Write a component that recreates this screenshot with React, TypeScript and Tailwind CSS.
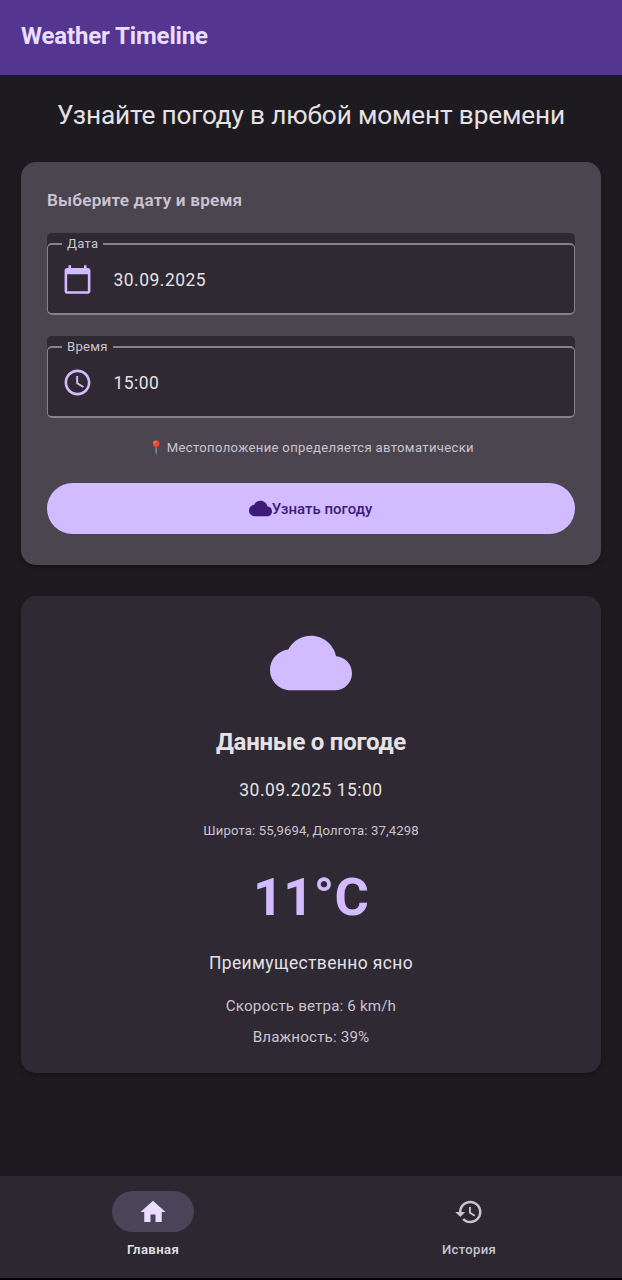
import type { ReactNode } from "react";

const CLOUD =
  "M19.35 10.04C18.67 6.59 15.64 4 12 4 9.11 4 6.6 5.64 5.35 8.04 2.34 8.36 0 10.91 0 14c0 3.31 2.69 6 6 6h13c2.76 0 5-2.24 5-5 0-2.64-2.05-4.78-4.65-4.96z";
const CALENDAR =
  "M20 3h-1V1h-2v2H7V1H5v2H4c-1.1 0-2 .9-2 2v16c0 1.1.9 2 2 2h16c1.1 0 2-.9 2-2V5c0-1.1-.9-2-2-2zm0 18H4V8h16v13z";
const CLOCK =
  "M11.99 2C6.47 2 2 6.48 2 12s4.47 10 9.99 10C17.52 22 22 17.52 22 12S17.52 2 11.99 2zM12 20c-4.42 0-8-3.58-8-8s3.58-8 8-8 8 3.58 8 8-3.58 8-8 8zm.5-13H11v6l5.25 3.15.75-1.23-4.5-2.67z";
const HOME = "M10 20v-6h4v6h5v-8h3L12 3 2 12h3v8z";
const HISTORY =
  "M13 3c-4.97 0-9 4.03-9 9H1l3.89 3.89.07.14L9 12H6c0-3.87 3.13-7 7-7s7 3.13 7 7-3.13 7-7 7c-1.93 0-3.68-.79-4.94-2.06l-1.42 1.42C8.27 19.99 10.51 21 13 21c4.97 0 9-4.03 9-9s-4.03-9-9-9zm-1 5v5l4.28 2.54.72-1.21-3.5-2.08V8H12z";

function Icon({ path, className }: { path: string; className: string }) {
  return (
    <svg viewBox="0 0 24 24" fill="currentColor" className={className}>
      <path d={path} />
    </svg>
  );
}

function Field({ label, value, icon }: { label: string; value: string; icon: string }) {
  return (
    <div className="h-[82px] rounded-[5px] bg-[#2e2933]">
      <fieldset className="flex h-full flex-col rounded-[5px] border border-y-2 border-[#86818b] pl-[14px]">
        <legend className="h-[22px] px-[5px] text-[13.1px] leading-[22px] tracking-[0.3px] text-[#cac4d0]">
          {label}
        </legend>
        <div className="flex h-[48px] items-center">
          <Icon path={icon} className="size-[31px] text-[#d3bbff]" />
          <span className="ml-[20.5px] mt-px text-[17.45px] leading-6 tracking-[0.5px] text-[#e6e1e5]">{value}</span>
        </div>
      </fieldset>
    </div>
  );
}

function NavItem({ label, icon, active }: { label: string; icon: string; active?: boolean }) {
  return (
    <button className="flex flex-1 flex-col items-center">
      <span
        className={
          active
            ? "flex h-[41px] w-[82px] items-center justify-center rounded-full bg-[#4b4358] text-[#ebddff]"
            : "flex h-[41px] w-[82px] items-center justify-center text-[#cac4d0]"
        }
      >
        <Icon path={icon} className="size-[30px]" />
      </span>
      <span
        className={
          active
            ? "mt-[8px] text-[13.1px] font-semibold leading-5 tracking-[0.4px] text-[#e6e1e5]"
            : "mt-[8px] text-[13.1px] font-medium leading-5 tracking-[0.3px] text-[#cac4d0]"
        }
      >
        {label}
      </span>
    </button>
  );
}

function Line({ className, children }: { className: string; children: ReactNode }) {
  return <p className={`whitespace-nowrap text-center ${className}`}>{children}</p>;
}

export default function App() {
  return (
    <div className="flex h-[1280px] w-[622px] flex-col overflow-hidden bg-[#1d1b1f] font-['Roboto','Noto_Color_Emoji',sans-serif]">
      <header className="h-[75px] bg-[#543690] pl-[21px] pt-[20px]">
        <h1 className="text-[24px] font-bold leading-8 tracking-[-0.14px] text-[#ebddff]">Weather Timeline</h1>
      </header>

      <main className="flex flex-1 flex-col px-[21px] pt-[24px]">
        <Line className="text-[26.2px] leading-8 tracking-[-0.14px] text-[#e6e1e5]">
          Узнайте погоду в любой момент времени
        </Line>

        <section className="mt-[31px] h-[403px] rounded-[15px] bg-[#4b4550] px-[26px] pt-[26px] shadow-[0_3px_6px_rgba(0,0,0,0.3)]">
          <h2 className="text-[17.2px] font-semibold leading-6 tracking-[0.18px] text-[#cac4d0]">
            Выберите дату и время
          </h2>
          <div className="mt-[21px] flex flex-col gap-[21px]">
            <Field label="Дата" value="30.09.2025" icon={CALENDAR} />
            <Field label="Время" value="15:00" icon={CLOCK} />
          </div>
          <Line className="mt-[20px] text-[13.1px] leading-5 tracking-[0.33px] text-[#cac4d0]">
            <span className="-mr-[1.5px]">📍</span> Местоположение определяется автоматически
          </Line>
          <button className="mt-[25px] flex h-[51px] w-full items-center justify-center rounded-full bg-[#d3bbff] pr-px pt-px text-[15px] font-medium tracking-[0px] text-[#3d1c78]">
            <Icon path={CLOUD} className="mb-px size-[23px]" />
            Узнать погоду
          </button>
        </section>

        <section className="mt-[31px] flex h-[477px] flex-col items-center rounded-[15px] bg-[#2e2933] pt-[25.6px] shadow-[0_3px_6px_rgba(0,0,0,0.3)]">
          <Icon path={CLOUD} className="size-[82px] text-[#d3bbff]" />
          <Line className="mt-[22px] text-[24px] font-bold leading-8 tracking-[-0.26px] text-[#e6e1e5]">
            Данные о погоде
          </Line>
          <Line className="mt-[20.4px] text-[17.45px] leading-6 tracking-[0.5px] text-[#e6e1e5]">30.09.2025 15:00</Line>
          <Line className="mt-[19px] text-[13.1px] leading-5 tracking-[0.14px] text-[#cac4d0]">
            Широта: 55,9694, Долгота: 37,4298
          </Line>
          <Line className="mt-[26px] text-[52.6px] font-bold leading-[60px] tracking-[0.2px] text-[#d3bbff]">11°C</Line>
          <Line className="mt-[24px] text-[17.45px] leading-6 tracking-[0.39px] text-[#e6e1e5]">
            Преимущественно ясно
          </Line>
          <Line className="mt-[21px] text-[15.2px] leading-5 tracking-[0.14px] text-[#cac4d0]">
            Скорость ветра: 6 km/h
          </Line>
          <Line className="mt-[11px] text-[15.2px] leading-5 tracking-[0.14px] text-[#cac4d0]">Влажность: 39%</Line>
        </section>
      </main>

      <nav className="flex h-[104px] gap-[10px] border-b-2 border-black bg-[#2c2730] pt-[15px]">
        <NavItem label="Главная" icon={HOME} active />
        <NavItem label="История" icon={HISTORY} />
      </nav>
    </div>
  );
}
